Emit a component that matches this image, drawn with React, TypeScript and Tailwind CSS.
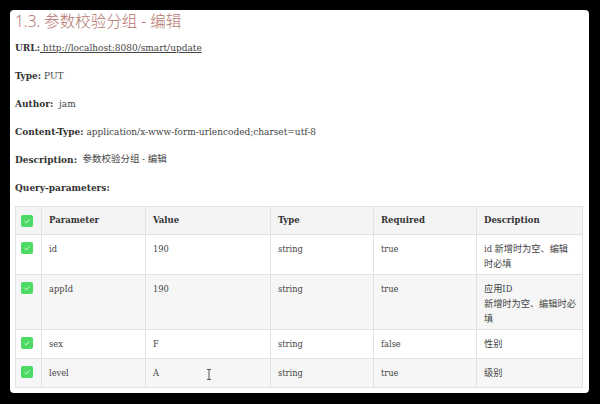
import React from "react";

const serif = {
  fontFamily: '"DejaVu Serif Condensed", "DejaVu Serif", "Noto Sans CJK SC", serif',
  fontStretch: "semi-condensed" as const,
};

function Check() {
  return (
    <div className="w-[12px] h-[12px] rounded-[2px] bg-[#4cd964] flex items-center justify-center">
      <svg width="8" height="8" viewBox="0 0 8 8">
        <path d="M1.6 4.2 L3.3 5.8 L6.4 2.4" stroke="#eafff0" strokeWidth="0.9" fill="none" />
      </svg>
    </div>
  );
}

type Row = { p: string; v: string; t: string; r: string; d: React.ReactNode; h: string; bg: string };

const rows: Row[] = [
  { p: "id", v: "190", t: "string", r: "true", d: (<>id 新增时为空、编辑<br />时必填</>), h: "h-[40px]", bg: "bg-white" },
  { p: "appId", v: "190", t: "string", r: "true", d: (<>应用ID<br />新增时为空、编辑时必<br />填</>), h: "h-[55px]", bg: "bg-[#f6f6f6]" },
  { p: "sex", v: "F", t: "string", r: "false", d: "性别", h: "h-[29px]", bg: "bg-white" },
  { p: "level", v: "A", t: "string", r: "true", d: "级别", h: "h-[29px]", bg: "bg-[#f6f6f6]" },
];

export default function App() {
  const cell = "border border-[#e2e2e2] align-top pt-[6px] px-[7px] leading-[15px]";
  return (
    <div className="w-[600px] h-[404px] bg-black pt-[10px] pl-[10px] overflow-hidden">
      <div
        className="relative w-[579px] h-[383px] bg-white rounded-[4px] pl-[5px] pr-[7px] text-[#333] text-[10px]"
        style={serif}
      >
        <div
          className="h-[23px] flex items-center text-[15.5px] font-light text-[#b4736c]"
          style={{ fontFamily: '"Noto Sans", "Noto Sans CJK SC", sans-serif', fontStretch: "normal" }}
        >
          1.3. 参数校验分组 - 编辑
        </div>
        <div className="h-[28px] flex items-center">
          <b>URL:</b>
          <span className="underline text-[#444]">&nbsp;http://localhost:8080/smart/update</span>
        </div>
        <div className="h-[28px] flex items-center">
          <b>Type:</b>
          <span className="text-[#444]">&nbsp;PUT</span>
        </div>
        <div className="h-[28px] flex items-center">
          <b>Author:</b>
          <span className="text-[#444]">&nbsp;&nbsp;jam</span>
        </div>
        <div className="h-[28px] flex items-center">
          <b>Content-Type:</b>
          <span className="text-[#444]">&nbsp;application/x-www-form-urlencoded;charset=utf-8</span>
        </div>
        <div className="h-[28px] flex items-center">
          <b>Description:</b>
          <span className="text-[#444] text-[9.5px]">&nbsp;&nbsp;参数校验分组 - 编辑</span>
        </div>
        <div className="h-[28px] flex items-center">
          <b>Query-parameters:</b>
        </div>
        <table className="mt-[5px] w-[567px] table-fixed border-collapse text-[#444] text-[9.5px]">
          <colgroup>
            <col className="w-[26px]" />
            <col className="w-[104px]" />
            <col className="w-[125px]" />
            <col className="w-[103px]" />
            <col className="w-[103px]" />
            <col className="w-[106px]" />
          </colgroup>
          <thead>
            <tr className="h-[28px] bg-[#f4f4f4] text-[#333]">
              <th className="border border-[#e2e2e2] align-middle pl-[5px]"><Check /></th>
              <th className="border border-[#e2e2e2] align-middle px-[7px] text-left font-bold">Parameter</th>
              <th className="border border-[#e2e2e2] align-middle px-[7px] text-left font-bold">Value</th>
              <th className="border border-[#e2e2e2] align-middle px-[7px] text-left font-bold">Type</th>
              <th className="border border-[#e2e2e2] align-middle px-[7px] text-left font-bold">Required</th>
              <th className="border border-[#e2e2e2] align-middle px-[7px] text-left font-bold">Description</th>
            </tr>
          </thead>
          <tbody className="text-[9.2px]">
            {rows.map((r) => (
              <tr key={r.p} className={`${r.h} ${r.bg}`}>
                <td className="border border-[#e2e2e2] align-top pt-[7px] pl-[5px]"><Check /></td>
                <td className={cell}>{r.p}</td>
                <td className={cell}>{r.v}</td>
                <td className={cell}>{r.t}</td>
                <td className={cell}>{r.r}</td>
                <td className={`${cell} whitespace-nowrap`}>{r.d}</td>
              </tr>
            ))}
          </tbody>
        </table>
        <svg className="absolute left-[196px] top-[359px]" width="6" height="11" viewBox="0 0 6 11">
          <path d="M1 0.5 H5 M3 0.5 V10.5 M1 10.5 H5" stroke="#555" strokeWidth="1" fill="none" />
        </svg>
      </div>
    </div>
  );
}
